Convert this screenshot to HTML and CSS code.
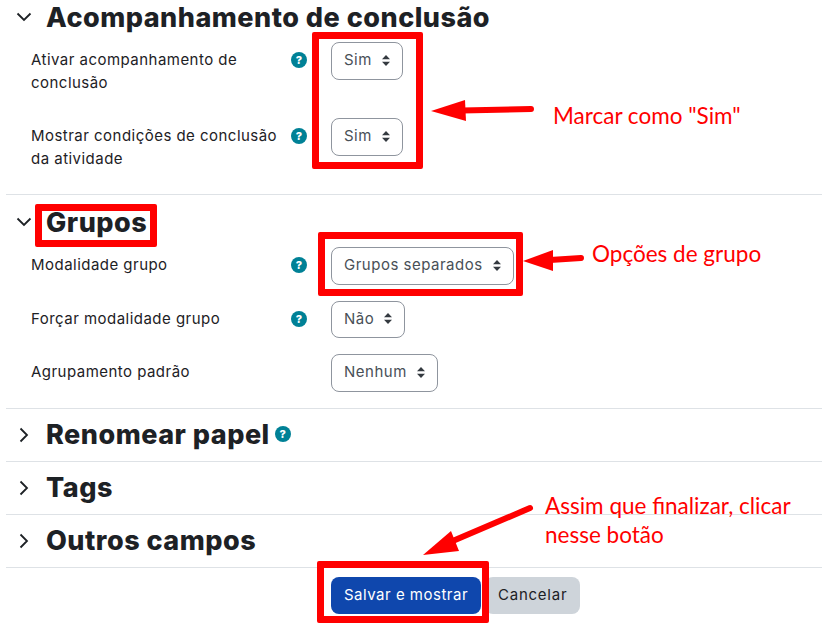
FILE: index.html
```html
<!DOCTYPE html>
<html lang="pt-BR">
<head>
  <meta charset="UTF-8" />
  <meta name="viewport" content="width=device-width, initial-scale=1" />
  <title>Acompanhamento de conclusão</title>
  <link rel="stylesheet" href="styles.css">
</head>
<body>
  <div class="page">
    <section class="section open first">
      <h3 class="heading">
        <svg class="chevron" viewBox="0 0 16 16"><path d="M1.5 4.5 8 11l6.5-6.5"/></svg>
        Acompanhamento de conclusão
      </h3>
      <div class="row">
        <div class="label">Ativar acompanhamento de conclusão</div>
        <span class="help">?</span>
        <div class="select"><span>Sim</span><svg class="caret" viewBox="0 0 8 11"><path d="M4 0 8 4.3H0zM4 11 0 6.7h8z"/></svg></div>
      </div>
      <div class="row">
        <div class="label">Mostrar condições de conclusão da atividade</div>
        <span class="help">?</span>
        <div class="select"><span>Sim</span><svg class="caret" viewBox="0 0 8 11"><path d="M4 0 8 4.3H0zM4 11 0 6.7h8z"/></svg></div>
      </div>
    </section>

    <section class="section open">
      <h3 class="heading">
        <svg class="chevron" viewBox="0 0 16 16"><path d="M1.5 4.5 8 11l6.5-6.5"/></svg>
        Grupos
      </h3>
      <div class="row">
        <div class="label">Modalidade grupo</div>
        <span class="help">?</span>
        <div class="select"><span>Grupos separados</span><svg class="caret" viewBox="0 0 8 11"><path d="M4 0 8 4.3H0zM4 11 0 6.7h8z"/></svg></div>
      </div>
      <div class="row">
        <div class="label">Forçar modalidade grupo</div>
        <span class="help">?</span>
        <div class="select"><span>Não</span><svg class="caret" viewBox="0 0 8 11"><path d="M4 0 8 4.3H0zM4 11 0 6.7h8z"/></svg></div>
      </div>
      <div class="row">
        <div class="label">Agrupamento padrão</div>
        <span></span>
        <div class="select"><span>Nenhum</span><svg class="caret" viewBox="0 0 8 11"><path d="M4 0 8 4.3H0zM4 11 0 6.7h8z"/></svg></div>
      </div>
    </section>

    <section class="section">
      <h3 class="heading">
        <svg class="chevron" viewBox="0 0 16 16"><path d="M4.5 1.5 11 8l-6.5 6.5"/></svg>
        Renomear papel <span class="help">?</span>
      </h3>
    </section>

    <section class="section">
      <h3 class="heading">
        <svg class="chevron" viewBox="0 0 16 16"><path d="M4.5 1.5 11 8l-6.5 6.5"/></svg>
        Tags
      </h3>
    </section>

    <section class="section">
      <h3 class="heading">
        <svg class="chevron" viewBox="0 0 16 16"><path d="M4.5 1.5 11 8l-6.5 6.5"/></svg>
        Outros campos
      </h3>
    </section>

    <div class="buttons">
      <button class="btn btn-primary">Salvar e mostrar</button>
      <button class="btn btn-secondary">Cancelar</button>
    </div>
  </div>

  <!-- red notes drawn over the screenshot -->
  <div class="box box-sim"></div>
  <div class="box box-grupos"></div>
  <div class="box box-opcoes"></div>
  <div class="box box-salvar"></div>

  <svg class="arrows" viewBox="0 0 822 628">
    <path class="shaft" d="M531 109 462 110.500"/>
    <path class="tip" d="M431 111 465 100 466 121z"/>
    <path class="shaft" d="M581 258 550 260"/>
    <path class="tip" d="M523 261 553 250 553 271z"/>
    <path class="shaft" d="M530 508 448 543"/>
    <path class="tip" d="M423 555 451 531 459 551z"/>
  </svg>

  <div class="note note-sim">Marcar como "Sim"</div>
  <div class="note note-grupo">Opções de grupo</div>
  <div class="note note-botao">Assim que finalizar, clicar<br>nesse botão</div>
</body>
</html>
```

FILE: styles.css
```css
body {
  margin: 0;
  background: #fff;
  overflow: hidden;
  font-family: Inter, "Open Sans", sans-serif;
  font-size: 15px;
  line-height: 22.5px;
  color: #1d2125;
}

.page {
  padding-left: 6px;
}

.section {
  padding: 9px 0;
  border-bottom: 1px solid #dee2e6;
}

.section.open {
  padding: 10px 0 0;
}

.section.first {
  padding-top: 0;
}

.heading {
  display: flex;
  align-items: center;
  box-sizing: border-box;
  height: 34px;
  margin: 0;
  padding: 2px 0 0 10px;
  font-size: 27px;
  font-weight: 800;
  letter-spacing: 0.5px;
}

.section.open .heading {
  margin-bottom: 8px;
}

.chevron {
  width: 16px;
  height: 16px;
  margin: -2px 14px 0 0;
  fill: none;
  stroke: #1d2125;
  stroke-width: 1.8;
}

.row {
  display: grid;
  grid-template-columns: 260px 40px auto;
  align-items: start;
  padding-left: 25px;
  margin-bottom: 16px;
}

.label {
  width: 250px;
  padding: 7px 0 8px;
  letter-spacing: 0.47px;
}

.help {
  display: flex;
  align-items: center;
  justify-content: center;
  width: 16px;
  height: 16px;
  margin-top: 10px;
  border-radius: 50%;
  background: #008196;
  color: #fff;
  font-size: 11px;
  font-weight: 800;
  letter-spacing: 0;
  line-height: 16px;
}

.heading .help {
  margin: 0 0 3px 5px;
}

.select {
  display: inline-flex;
  align-items: center;
  justify-self: start;
  box-sizing: border-box;
  height: 37.500px;
  padding: 0 12px 1px;
  border: 1px solid #8f959e;
  border-radius: 8px;
  color: #495057;
  letter-spacing: 0.5px;
}

.caret {
  width: 8px;
  height: 11px;
  margin-left: 10px;
  fill: #343a40;
}

.buttons {
  display: flex;
  gap: 4px;
  margin: 9px 0 0 325px;
}

.btn {
  height: 37.500px;
  padding: 0 13px;
  border: 0;
  border-radius: 8px;
  font: inherit;
  letter-spacing: 0.5px;
}

.btn-primary {
  background: #0f47ad;
  color: #fff;
}

.btn-secondary {
  background: #ced4da;
  color: #1d2125;
  letter-spacing: 0.75px;
}

.box {
  position: absolute;
  box-sizing: border-box;
  border: 7px solid #f00;
  border-radius: 2px;
}

.box-sim { left: 312px; top: 32px; width: 111px; height: 137px; }
.box-grupos { left: 35px; top: 204px; width: 122px; height: 43px; }
.box-opcoes { left: 318px; top: 232px; width: 205px; height: 64px; }
.box-salvar { left: 317px; top: 561px; width: 172px; height: 62px; }

.arrows {
  position: absolute;
  left: 0;
  top: 0;
  width: 822px;
  height: 628px;
  pointer-events: none;
}

.shaft {
  fill: none;
  stroke: #f00;
  stroke-width: 6;
  stroke-linecap: round;
}

.tip {
  fill: #f00;
}

.note {
  position: absolute;
  color: #f00;
  font-family: Lato, "Open Sans", sans-serif;
  font-size: 22.500px;
  line-height: 29px;
}

.note-sim { left: 553px; top: 101px; }
.note-grupo { left: 592px; top: 239px; }
.note-botao { left: 545px; top: 491px; }
```
